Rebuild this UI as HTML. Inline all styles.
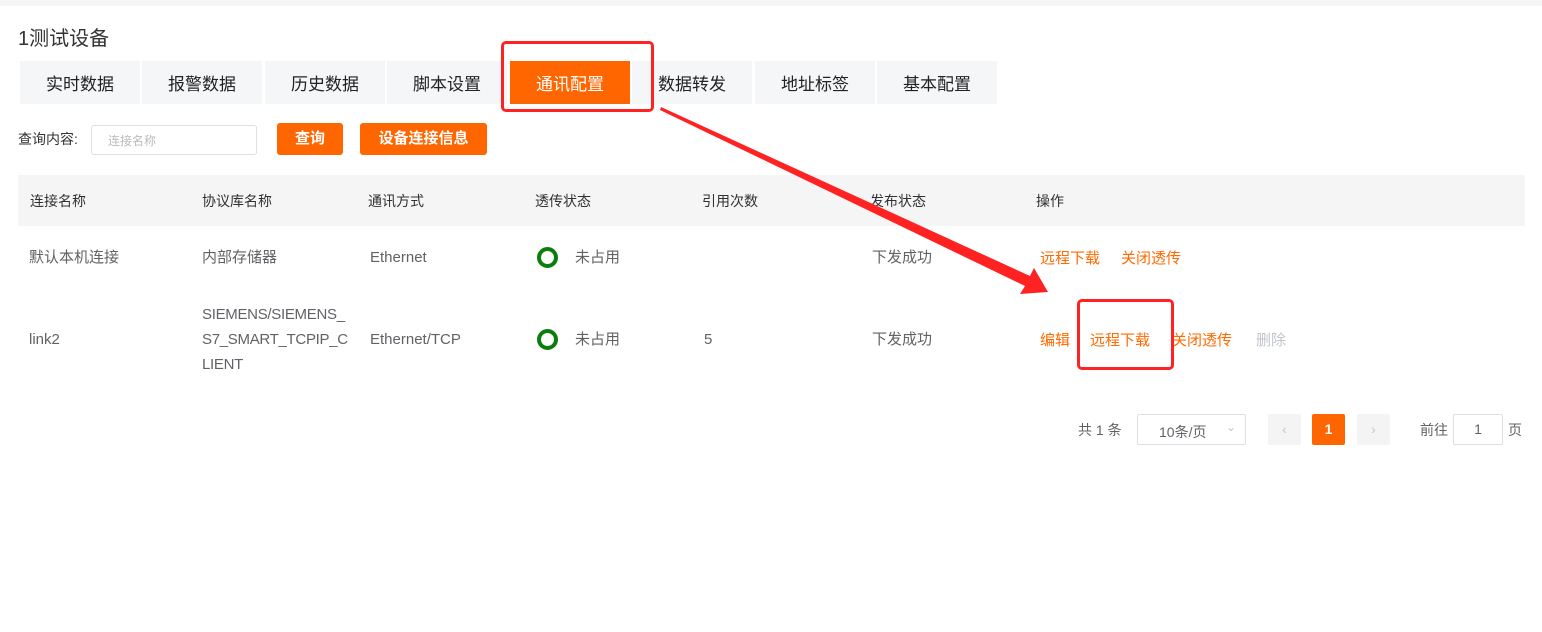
<!DOCTYPE html>
<html><head><meta charset="utf-8"><style>
*{margin:0;padding:0;box-sizing:border-box}
body{width:1542px;height:632px;background:#fff;position:relative;overflow:hidden;font-family:"Liberation Sans","Noto Sans CJK SC",sans-serif;color:#606266}
.a{position:absolute;white-space:nowrap}
.tab{position:absolute;top:61px;height:43px;width:120px;background:#f5f6f8;color:#222;font-size:17px;line-height:47px;text-align:center}
.th{position:absolute;top:191px;font-size:14px;color:#303133}
.td{position:absolute;font-size:15px;color:#606266;line-height:25px}
.ring{position:absolute;width:21px;height:21px;border:4px solid #0a7d0a;border-radius:50%}
.op{position:absolute;font-size:15px;color:#ff6a00}
.btn{position:absolute;background:#ff6600;color:#fff;font-size:15px;font-weight:bold;text-align:center;border-radius:3px}
.pg{position:absolute;top:414px;height:31px;border-radius:2px}
</style></head><body>
<div class="a" style="left:0;top:0;width:1542px;height:6px;background:#f5f6f8"></div>
<div class="a" style="left:18px;top:22px;font-size:20px;color:#333">1测试设备</div>
<div class="tab" style="left:20px">实时数据</div>
<div class="tab" style="left:142px">报警数据</div>
<div class="tab" style="left:265px">历史数据</div>
<div class="tab" style="left:387px">脚本设置</div>
<div class="tab" style="left:510px;background:#ff6600;color:#fff">通讯配置</div>
<div class="tab" style="left:632px">数据转发</div>
<div class="tab" style="left:755px">地址标签</div>
<div class="tab" style="left:877px">基本配置</div>
<div class="a" style="left:501px;top:41px;width:153px;height:71px;border:3px solid #f22;border-radius:5px"></div>

<div class="a" style="left:18px;top:129px;font-size:14px;color:#333">查询内容:</div>
<div class="a" style="left:91px;top:125px;width:166px;height:30px;border:1px solid #dcdfe6;border-radius:3px;font-size:12px;color:#bbb;padding:6px 0 0 16px">连接名称</div>
<div class="btn" style="left:277px;top:123px;width:66px;height:32px;line-height:32px">查询</div>
<div class="btn" style="left:360px;top:123px;width:127px;height:32px;line-height:32px">设备连接信息</div>

<div class="a" style="left:18px;top:175px;width:1507px;height:51px;background:#f5f5f5"></div>
<div class="th" style="left:30px">连接名称</div>
<div class="th" style="left:202px">协议库名称</div>
<div class="th" style="left:368px">通讯方式</div>
<div class="th" style="left:535px">透传状态</div>
<div class="th" style="left:702px">引用次数</div>
<div class="th" style="left:870px">发布状态</div>
<div class="th" style="left:1036px">操作</div>

<div class="td" style="left:29px;top:245px">默认本机连接</div>
<div class="td" style="left:202px;top:245px">内部存储器</div>
<div class="td" style="left:370px;top:245px">Ethernet</div>
<div class="ring" style="left:537px;top:247px"></div>
<div class="td" style="left:575px;top:245px">未占用</div>
<div class="td" style="left:872px;top:245px">下发成功</div>
<div class="op" style="left:1040px;top:247px">远程下载</div>
<div class="op" style="left:1121px;top:247px">关闭透传</div>

<div class="td" style="left:29px;top:327px">link2</div>
<div class="td" style="left:202px;top:302px;letter-spacing:-0.3px">SIEMENS/SIEMENS_<br>S7_SMART_TCPIP_C<br>LIENT</div>
<div class="td" style="left:370px;top:327px">Ethernet/TCP</div>
<div class="ring" style="left:537px;top:329px"></div>
<div class="td" style="left:575px;top:327px">未占用</div>
<div class="td" style="left:704px;top:327px">5</div>
<div class="td" style="left:872px;top:327px">下发成功</div>
<div class="op" style="left:1040px;top:329px">编辑</div>
<div class="op" style="left:1090px;top:329px">远程下载</div>
<div class="op" style="left:1172px;top:329px">关闭透传</div>
<div class="op" style="left:1256px;top:329px;color:#c0c4cc">删除</div>
<div class="a" style="left:1077px;top:299px;width:97px;height:71px;border:3px solid #f22;border-radius:5px"></div>

<svg class="a" style="left:0;top:0" width="1542" height="632"><polygon points="661,107 1030,276 1034,268 1048,292 1020,294 1025,286 660,110" fill="#f22"/></svg>

<div class="a" style="left:1078px;top:420px;font-size:14px;color:#606266">共 1 条</div>
<div class="pg" style="left:1137px;width:109px;border:1px solid #dcdfe6;font-size:14px;padding:7px 0 0 21px">10条/页<span style="position:absolute;left:88px;top:5px;color:#c0c4cc;font-size:12px">&#8964;</span></div>
<div class="pg" style="left:1268px;width:33px;background:#f4f4f5;color:#c0c4cc;text-align:center;line-height:31px;font-size:14px">&lsaquo;</div>
<div class="pg" style="left:1312px;width:33px;background:#ff6600;color:#fff;text-align:center;line-height:31px;font-size:14px;font-weight:bold">1</div>
<div class="pg" style="left:1357px;width:33px;background:#f4f4f5;color:#c0c4cc;text-align:center;line-height:31px;font-size:14px">&rsaquo;</div>
<div class="a" style="left:1420px;top:420px;font-size:14px;color:#606266">前往</div>
<div class="pg" style="left:1453px;width:50px;border:1px solid #dcdfe6;text-align:center;line-height:29px;font-size:14px">1</div>
<div class="a" style="left:1508px;top:420px;font-size:14px;color:#606266">页</div>
</body></html>
